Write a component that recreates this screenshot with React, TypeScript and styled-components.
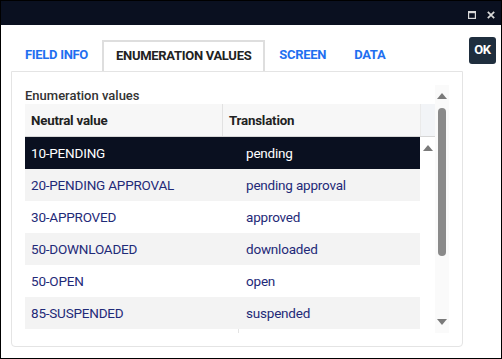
import React from "react";
import styled, { createGlobalStyle } from "styled-components";

const Global = createGlobalStyle`
  html, body { margin: 0; padding: 0; background: #ffffff; }
  body { font-family: Roboto, "Noto Sans", Arial, sans-serif; }
  * { box-sizing: border-box; }
`;

const Window = styled.div`
  width: 502px;
  height: 359px;
  border: 1px solid #000;
  background: #fff;
  display: flex;
  flex-direction: column;
  overflow: hidden;
`;

const TitleBar = styled.div`
  height: 24px;
  background: #0a1020;
  display: flex;
  align-items: center;
  justify-content: flex-end;
  padding-right: 6px;
  gap: 11px;
  flex-shrink: 0;
`;

const TitleIcon = styled.svg`
  width: 8px;
  height: 8px;
  display: block;
  margin-top: 3px;
`;

const Content = styled.div`
  flex: 1;
  display: flex;
  align-items: flex-start;
  gap: 6px;
  padding: 12px 5px 10px 10px;
`;

const Main = styled.div`
  width: 452px;
  display: flex;
  flex-direction: column;
  margin-top: 3px;
`;

const Tabs = styled.div`
  display: flex;
  height: 31px;
`;

const Tab = styled.div<{ $active?: boolean }>`
  height: 31px;
  padding: 0 ${(p) => (p.$active ? 12 : 14)}px 2px;
  display: flex;
  align-items: center;
  font-size: 13px;
  font-weight: 700;
  letter-spacing: -0.3px;
  color: ${(p) => (p.$active ? "#222222" : "#1f6ff0")};
  border: ${(p) => (p.$active ? "2px solid #dedede" : "none")};
  border-bottom: none;
`;

const Panel = styled.div`
  height: 276px;
  border: 1px solid #e4e4e4;
  border-radius: 0 0 4px 4px;
  padding: 13px 12px 13px 13px;
`;

const ScrollArea = styled.div`
  display: flex;
  height: 248px;
`;

const ScrollContent = styled.div`
  width: 410px;
  display: flex;
  flex-direction: column;
`;

const SectionLabel = styled.div`
  height: 19px;
  font-size: 13px;
  font-weight: 500;
  color: #333333;
  line-height: 19px;
  padding-top: 1px;
`;

const HeaderRow = styled.div`
  display: flex;
  height: 33px;
  background: #f7f7f7;
  border-bottom: 1px solid #d6d6d6;
`;

const HeaderCell = styled.div<{ $w: number; $sep?: boolean }>`
  width: ${(p) => p.$w}px;
  display: flex;
  align-items: center;
  padding-left: 6px;
  font-size: 13.3px;
  font-weight: 700;
  letter-spacing: -0.2px;
  color: #222222;
  border-right: ${(p) => (p.$sep ? "1px solid #e2e2e2" : "none")};
`;

const HeaderGutter = styled.div`
  width: 15px;
  background: #f2f4f7;
  border-left: 1px solid #eaeaea;
`;

const Body = styled.div`
  flex: 1;
  display: flex;
  overflow: hidden;
`;

const Rows = styled.div`
  width: 395px;
  display: flex;
  flex-direction: column;
  position: relative;
`;

const ColumnLine = styled.div`
  position: absolute;
  left: 213px;
  top: 0;
  bottom: 0;
  width: 1px;
  background: #e4e4e4;
`;

const Row = styled.div<{ $selected?: boolean; $alt?: boolean }>`
  display: flex;
  height: 32px;
  flex-shrink: 0;
  background: ${(p) => (p.$selected ? "#0a1020" : p.$alt ? "#f3f3f3" : "#ffffff")};
  color: ${(p) => (p.$selected ? "#ffffff" : "#1f2a78")};
  font-size: 13.5px;
  letter-spacing: -0.2px;
  position: relative;
  z-index: 1;
`;

const Cell = styled.div<{ $w?: number; $pad: number }>`
  width: ${(p) => (p.$w ? `${p.$w}px` : "auto")};
  flex: ${(p) => (p.$w ? "none" : "1")};
  display: flex;
  align-items: center;
  padding-left: ${(p) => p.$pad}px;
  padding-bottom: 1px;
`;

const InnerGutter = styled.div`
  width: 15px;
  display: flex;
  justify-content: center;
  padding-top: 8px;
`;

const Scrollbar = styled.div`
  width: 14px;
  background: #fafafa;
  display: flex;
  flex-direction: column;
  align-items: center;
  padding-top: 8px;
  padding-bottom: 8px;
`;

const Thumb = styled.div`
  width: 8px;
  height: 148px;
  border-radius: 4px;
  background: #8a8a8a;
  margin-top: 9px;
`;

const Spacer = styled.div`
  flex: 1;
`;

const Arrow = styled.svg`
  display: block;
  width: 10px;
  height: 6px;
`;

const OkButton = styled.button`
  width: 27px;
  height: 27px;
  border: none;
  border-radius: 3px;
  background: #1f2e3e;
  color: #ffffff;
  font-family: Roboto, Arial, sans-serif;
  font-size: 13px;
  font-weight: 700;
  letter-spacing: -0.3px;
  padding: 0 0 2px;
  display: flex;
  align-items: center;
  justify-content: center;
`;

const Up = () => (
  <Arrow viewBox="0 0 10 6">
    <polygon points="5,0 10,6 0,6" fill="#7a7a7a" />
  </Arrow>
);
const Down = () => (
  <Arrow viewBox="0 0 10 6">
    <polygon points="0,0 10,0 5,6" fill="#7a7a7a" />
  </Arrow>
);

const rows = [
  ["10-PENDING", "pending"],
  ["20-PENDING APPROVAL", "pending approval"],
  ["30-APPROVED", "approved"],
  ["50-DOWNLOADED", "downloaded"],
  ["50-OPEN", "open"],
  ["85-SUSPENDED", "suspended"],
];

export default function App() {
  return (
    <>
      <Global />
      <Window>
        <TitleBar>
          <TitleIcon viewBox="0 0 8 8">
            <rect x="0.6" y="0.6" width="6.8" height="6.8" fill="none" stroke="#d8d8d8" strokeWidth="1.2" />
            <rect x="0" y="0" width="8" height="2.2" fill="#d8d8d8" />
          </TitleIcon>
          <TitleIcon viewBox="0 0 8 8">
            <path d="M0.8 0.8 L7.2 7.2 M7.2 0.8 L0.8 7.2" stroke="#d8d8d8" strokeWidth="1.7" />
          </TitleIcon>
        </TitleBar>
        <Content>
          <Main>
            <Tabs>
              <Tab>FIELD INFO</Tab>
              <Tab $active>ENUMERATION VALUES</Tab>
              <Tab>SCREEN</Tab>
              <Tab>DATA</Tab>
            </Tabs>
            <Panel>
              <ScrollArea>
                <ScrollContent>
                  <SectionLabel>Enumeration values</SectionLabel>
                  <HeaderRow>
                    <HeaderCell $w={198} $sep>Neutral value</HeaderCell>
                    <HeaderCell $w={197}>Translation</HeaderCell>
                    <HeaderGutter />
                  </HeaderRow>
                  <Body>
                    <Rows>
                      <ColumnLine />
                      {rows.map(([a, b], i) => (
                        <Row key={a} $selected={i === 0} $alt={i % 2 === 1}>
                          <Cell $w={214} $pad={6}>{a}</Cell>
                          <Cell $pad={7}>{b}</Cell>
                        </Row>
                      ))}
                    </Rows>
                    <InnerGutter>
                      <Up />
                    </InnerGutter>
                  </Body>
                </ScrollContent>
                <Scrollbar>
                  <Up />
                  <Thumb />
                  <Spacer />
                  <Down />
                </Scrollbar>
              </ScrollArea>
            </Panel>
          </Main>
          <OkButton>OK</OkButton>
        </Content>
      </Window>
    </>
  );
}
